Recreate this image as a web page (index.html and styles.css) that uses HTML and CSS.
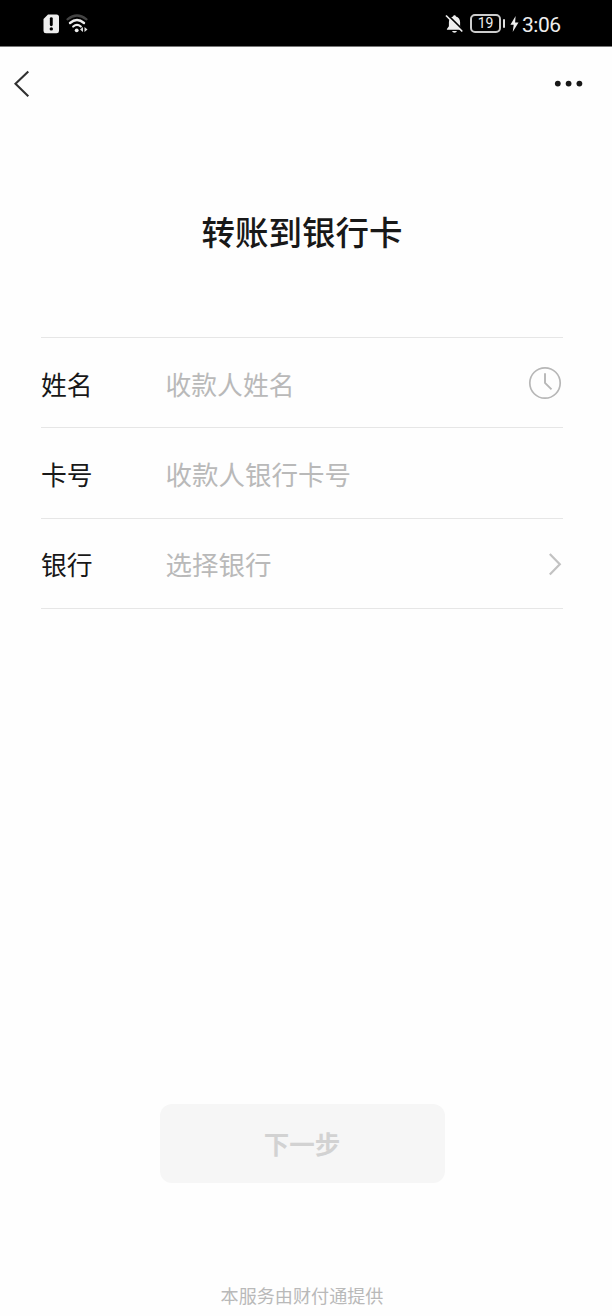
FILE: index.html
```html
<!DOCTYPE html>
<html lang="zh-CN">
<head>
<meta charset="utf-8">
<title>转账到银行卡</title>
<link rel="stylesheet" href="styles.css">
</head>
<body>
<div class="screen">
  <header class="status">
    <div class="status-left">
      <svg class="sim" width="17" height="20" viewBox="0 0 17 20"><path d="M5 .5H13.500Q16 .5 16 3V17Q16 19.200 13.500 19.200H3Q.5 19.200.5 17V5Z" fill="#eee"/><path d="M8.300 4.600v6.100" stroke="#000" stroke-width="2.900" stroke-linecap="round"/><circle cx="8.300" cy="14.900" r="1.700"/></svg>
      <svg class="wifi" width="24" height="20" viewBox="0 0 24 20" fill="none" stroke-linecap="round"><path d="M1.500 5.300Q11 -2.300 20.500 5.300" stroke="#444" stroke-width="2.200"/><path d="M4 9Q11 3.200 18 9" stroke="#eee" stroke-width="2.400"/><path d="M7.200 12.500Q11 9.300 14.800 12.500" stroke="#eee" stroke-width="2.200"/><circle cx="10.700" cy="16.300" r="1.900" fill="#eee"/><path d="M17 13v5L14 15.500ZM18.500 13v5L21.500 15.500Z" fill="#ddd"/></svg>
    </div>
    <div class="status-right">
      <svg class="bell" width="19" height="20" viewBox="0 0 19 20"><path d="M9.500 1.200c.9 0 1.400.6 1.400 1.400 2.700.7 4.200 2.900 4.200 5.600v4.100l2 2.600v.9H1.900v-.9l2-2.600V8.200c0-2.700 1.500-4.900 4.200-5.600 0-.8.5-1.400 1.400-1.400Z" fill="#eee"/><path d="M7 17h5q-.6 1.800-2.500 1.800T7 17Z" fill="#eee"/><path d="M2.600.8 19 17" stroke="#000" stroke-width="1.800"/><path d="M1 1.500 17.300 17.500" stroke="#eee" stroke-width="1.700"/></svg>
      <div class="battery">19</div>
      <div class="battery-tip"></div>
      <svg class="bolt" width="9" height="16" viewBox="0 0 9 16"><path d="M5.600 0 .4 8.800H3.700L2.700 16 8.500 6.500H5.100Z" fill="#eee"/></svg>
      <span class="time">3:06</span>
    </div>
  </header>
  <nav class="nav">
    <svg width="17" height="28" viewBox="0 0 17 28" fill="none" stroke="#303030" stroke-width="2.100"><path d="M15.300 1.500 2.500 13.800l12.800 12.500"/></svg>
    <svg width="30" height="8" viewBox="0 0 30 8" fill="#171717"><circle cx="3.800" cy="3.600" r="2.900"/><circle cx="14.600" cy="3.600" r="2.900"/><circle cx="25.400" cy="3.600" r="2.900"/></svg>
  </nav>
  <main class="content">
    <h1 class="title">转账到银行卡</h1>
    <div class="form">
      <div class="row">
        <span class="label">姓名</span><span class="hint">收款人姓名</span>
        <svg class="clock" width="34" height="34" viewBox="0 0 34 34" fill="none" stroke="#b7b7b7"><circle cx="17" cy="17" r="15.200" stroke-width="1.700"/><path d="M17 7.300v9.500l6.500 6.500" stroke-width="1.900"/></svg>
      </div>
      <div class="row">
        <span class="label">卡号</span><span class="hint wide">收款人银行卡号</span>
      </div>
      <div class="row">
        <span class="label">银行</span><span class="hint wide">选择银行</span>
        <svg class="chevron" width="14" height="24" viewBox="0 0 14 24" fill="none" stroke="#c2c2c2" stroke-width="2.200"><path d="M1.800 2 11.800 12.300 1.800 22.500"/></svg>
      </div>
    </div>
    <button class="next" disabled>下一步</button>
    <footer class="provider">本服务由财付通提供</footer>
  </main>
</div>
</body>
</html>
```
FILE: styles.css
```css
* { box-sizing: border-box; }
body {
  margin: 0;
  background: #fefefe;
  font-family: "Noto Sans CJK SC", sans-serif;
  color: #181818;
}
.screen {
  width: 612px;
  height: 1316px;
  overflow: hidden;
  display: flex;
  flex-direction: column;
}
.status {
  flex: none;
  height: 47px;
  background: #000;
  border-bottom: 1px solid #777;
  display: flex;
  justify-content: space-between;
  padding: 0 51px 0 43px;
  color: #eee;
  font-family: Roboto, sans-serif;
}
.status-left,
.status-right { display: flex; align-items: center; height: 47px; }
.wifi { margin-left: 6px; }
.bell { margin-right: 6px; }
.battery {
  width: 31px;
  height: 19px;
  border: 2px solid #ccc;
  border-radius: 5px;
  font-size: 14px;
  line-height: 15px;
  text-align: center;
}
.battery-tip { width: 2px; height: 9px; margin: 0 5px 0 2px; background: #ddd; border-radius: 1px; }
.time { width: 39px; padding-top: 2px; margin-left: 3px; font-size: 21px; letter-spacing: -.5px; line-height: 28px; white-space: nowrap; }
.nav {
  flex: none;
  height: 74px;
  display: flex;
  align-items: center;
  justify-content: space-between;
  padding: 0 28px 0 13px;
}
.content {
  flex: 1;
  display: flex;
  flex-direction: column;
  align-items: center;
  padding: 0 49px 0 41px;
}
.title {
  margin: 86px 0 0;
  font-size: 33.500px;
  line-height: 48px;
  font-weight: 500;
}
.form { width: 100%; margin-top: 82px; border-top: 1px solid #e6e6e6; }
.row {
  height: 90.400px;
  padding-top: 2px;
  border-bottom: 1px solid #e6e6e6;
  display: flex;
  align-items: center;
  font-size: 25.800px;
  line-height: 38px;
}
.label { width: 124.500px; }
.hint { color: #b9b9b9; }
.wide { font-size: 26.500px; }
.clock, .chevron { margin-left: auto; }
.clock { margin-right: 1px; margin-bottom: 2px; }
.chevron { margin-right: 1px; }
.next {
  width: 285px;
  height: 79px;
  margin-top: 495px;
  padding: 0 0 2px;
  border: 0;
  border-radius: 12px;
  background: #f6f6f6;
  color: #d2d2d2;
  font: 700 25.500px/38px "Noto Sans CJK SC", sans-serif;
}
.provider { margin-top: 99px; font-size: 18.100px; line-height: 26px; color: #b9b9b9; }
```
